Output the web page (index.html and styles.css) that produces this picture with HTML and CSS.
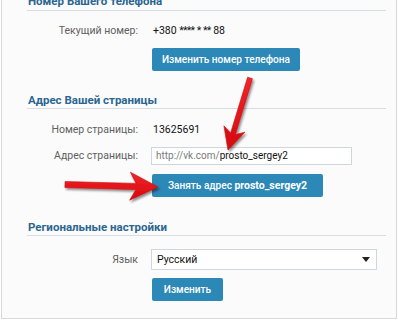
FILE: index.html
```html
<!DOCTYPE html>
<html lang="ru">
<head>
<meta charset="utf-8">
<title>Настройки</title>
<link rel="stylesheet" href="styles.css">
</head>
<body>
<div class="frame">
  <h2 class="head head-first">Номер Вашего телефона</h2>
  <div class="field f-12">
    <div class="label">Текущий номер:</div>
    <div class="value">+380 <span class="mask">****</span> <span class="mask">*</span> <span class="mask">**</span> 88</div>
  </div>
  <div class="field f-9">
    <div></div>
    <div><button class="btn btn-phone">Изменить номер телефона</button></div>
  </div>

  <h2 class="head head-2">Адрес Вашей страницы</h2>
  <div class="field f-13">
    <div class="label">Номер страницы:</div>
    <div class="value">13625691</div>
  </div>
  <div class="field f-9">
    <div class="label">Адрес страницы:</div>
    <div class="input"><span class="prefix">http://vk.com/</span>prosto_sergey2</div>
  </div>
  <div class="field f-9">
    <div></div>
    <div><button class="btn btn-addr">Занять адрес <b>prosto_sergey2</b></button></div>
  </div>

  <h2 class="head head-3">Региональные настройки</h2>
  <div class="field f-13">
    <div class="label">Язык</div>
    <div class="select"><span>Русский</span>
      <svg class="caret" width="8" height="5" viewBox="0 0 8 5"><path d="M0 0H8L4 5Z" fill="#222"/></svg>
    </div>
  </div>
  <div class="field f-8">
    <div></div>
    <div><button class="btn btn-lang">Изменить</button></div>
  </div>
</div>

<svg class="arrows" width="398" height="320" viewBox="0 0 398 320">
  <defs>
    <filter id="sh" x="-20%" y="-20%" width="140%" height="140%">
      <feDropShadow dx="1.5" dy="2" stdDeviation="1.3" flood-color="#000" flood-opacity="0.45"/>
    </filter>
    <linearGradient id="rg" x1="0" y1="0" x2="0" y2="1">
      <stop offset="0" stop-color="#f2262a"/>
      <stop offset="1" stop-color="#d5080d"/>
    </linearGradient>
  </defs>
  <polygon filter="url(#sh)" fill="url(#rg)" stroke="#c80a0e" stroke-width="0.6"
    points="252.4,78.7 235.4,134.5 244.9,132.2 228,150 223.9,125.8 230.6,133 247.6,77.3"/>
  <polygon filter="url(#sh)" fill="url(#rg)" stroke="#c80a0e" stroke-width="0.6"
    points="65.1,181.5 136.1,183.4 130.4,172.2 158,187 129.6,200.2 135.9,189.6 64.9,187.5"/>
</svg>
</body>
</html>
```

FILE: styles.css
```css
html, body {
  margin: 0;
  padding: 0;
  background: #ffffff;
}

body {
  font-family: Roboto, "Open Sans", sans-serif;
  font-size: 10.5px;
  color: #000;
  width: 398px;
  height: 320px;
  overflow: hidden;
  position: relative;
}

.frame {
  box-sizing: border-box;
  margin-left: 1px;
  width: 396px;
  height: 319px;
  border: 1px solid #d9d9d9;
  border-top: none;
  background: #fbfbfb;
  padding: 0 10px 0 25px;
  display: flex;
  flex-direction: column;
}

.head {
  margin: 0;
  font-size: 11.5px;
  font-weight: 700;
  line-height: 16px;
  height: 16px;
  color: #2b6590;
  border-bottom: 1px solid #d5dde5;
  padding-left: 1px;
  white-space: nowrap;
}

.head-first { margin-top: -7px; height: 17px; }
.head-2 { margin-top: 21px; }
.head-3 { margin-top: 22px; }

.field {
  display: grid;
  grid-template-columns: 111px 1fr;
  column-gap: 13px;
  align-items: center;
  line-height: 16px;
}

.f-8 { margin-top: 8px; }
.f-9 { margin-top: 9px; }
.f-12 { margin-top: 12px; }
.f-13 { margin-top: 13px; }

.label {
  text-align: right;
  color: #606060;
  white-space: nowrap;
}

.value {
  color: #111;
  padding-left: 2px;
  white-space: nowrap;
}

.mask { letter-spacing: -0.8px; }

.btn {
  display: block;
  margin-left: 1px;
  height: 23px;
  padding: 0;
  border: none;
  border-radius: 2px;
  background: #2b88b7;
  color: #fff;
  font-family: inherit;
  font-size: 10.1px;
  font-weight: 500;
  line-height: 23px;
  white-space: nowrap;
  text-align: center;
}

.btn b { font-weight: 700; font-size: 10.5px; }

.btn-phone { width: 148px; }
.btn-addr { width: 171px; }
.btn-lang { width: 71px; }

.input {
  box-sizing: border-box;
  width: 201px;
  height: 18px;
  border: 1px solid #cfd6dd;
  background: #fff;
  padding-left: 4px;
  line-height: 16px;
  font-size: 10px;
  color: #111;
  white-space: nowrap;
}

.prefix { color: #7a7a7a; }

.select {
  box-sizing: border-box;
  width: 226px;
  height: 21px;
  border: 1px solid #cfd6dd;
  background: #fff;
  padding: 0 5px 0 5px;
  display: flex;
  align-items: center;
  justify-content: space-between;
  color: #111;
}

.caret { display: block; margin-right: 1px; }

.arrows {
  position: absolute;
  left: 0;
  top: 0;
  pointer-events: none;
}
```
